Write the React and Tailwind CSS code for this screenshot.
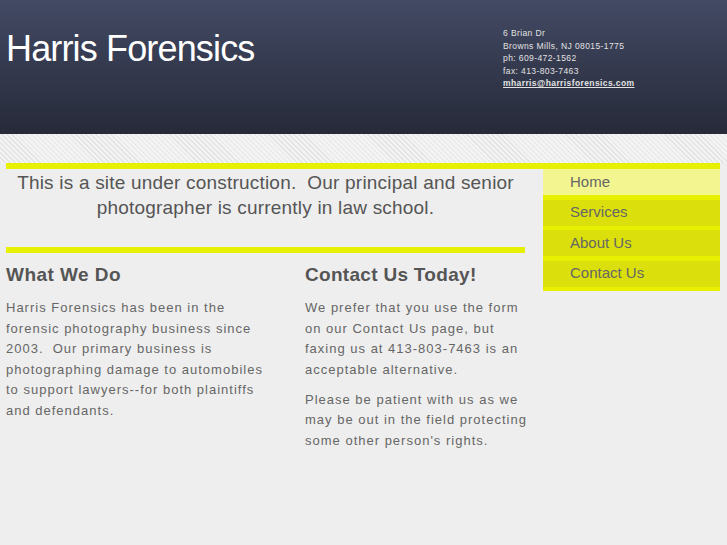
import React from "react";

const navItems = ["Home", "Services", "About Us", "Contact Us"];

export default function App() {
  return (
    <div className="min-h-[545px] bg-[#eeeeee] font-['Liberation_Sans',Arial,sans-serif]">
      <header className="h-[134px] flex justify-between bg-gradient-to-b from-[#434a64] to-[#262a39]">
        <h1 className="pl-[6px] pt-[31px] text-[36px] leading-none font-normal text-white tracking-[-0.85px]">
          Harris Forensics
        </h1>
        <div className="w-[224px] pt-[27px] text-[8.5px] leading-[12.5px] tracking-[0.4px] text-[#e2e2e2]">
          <div>6 Brian Dr</div>
          <div>Browns Mills, NJ 08015-1775</div>
          <div>ph: 609-472-1562</div>
          <div>fax: 413-803-7463</div>
          <div className="font-bold underline">mharris@harrisforensics.com</div>
        </div>
      </header>
      <div className="h-[29px] bg-[repeating-linear-gradient(45deg,#e3e3e3_0px,#e3e3e3_1px,#f3f3f3_1px,#f3f3f3_3.5px)]" />
      <div className="ml-[6px] w-[714px]">
        <div className="h-[6px] bg-[#e6f000]" />
        <div className="flex">
          <div className="w-[519px] shrink-0">
            <p className="pt-[1px] text-center text-[19px] leading-[25px] tracking-[0.2px] text-[#555555]">
              {"This is a site under construction.\u00a0 Our principal and senior photographer is currently in law school."}
            </p>
            <div className="mt-[27px] h-[6px] bg-[#e6f000]" />
            <div className="flex mt-[10px]">
              <div className="w-[265px] shrink-0">
                <h2 className="text-[19px] leading-[24px] font-bold tracking-[0.45px] text-[#555555]">What We Do</h2>
                <p className="mt-[11px] text-[13px] leading-[20.6px] tracking-[1px] text-[#666666]">
                  {"Harris Forensics has been in the forensic photography business since 2003.\u00a0 Our primary business is photographing damage to automobiles to support lawyers--for both plaintiffs and defendants."}
                </p>
              </div>
              <div className="ml-[34px] w-[224px] shrink-0">
                <h2 className="text-[19px] leading-[24px] font-bold tracking-[0.3px] text-[#555555]">Contact Us Today!</h2>
                <p className="mt-[11px] text-[13px] leading-[20.6px] tracking-[1px] text-[#666666]">
                  We prefer that you use the form on our Contact Us page, but faxing us at 413-803-7463 is an acceptable alternative.
                </p>
                <p className="mt-[9.5px] text-[13px] leading-[20.6px] tracking-[1px] text-[#666666]">
                  Please be patient with us as we may be out in the field protecting some other person's rights.
                </p>
              </div>
            </div>
          </div>
          <nav className="ml-[18px] w-[177px] shrink-0 self-start bg-[#e6f000] pb-[4.5px] flex flex-col gap-[4.5px]">
            {navItems.map((item, i) => (
              <div
                key={item}
                className={
                  i === 0
                    ? "h-[26px] flex items-center pl-[27px] text-[15px] text-[#666666] bg-[#f3f690]"
                    : "h-[26px] flex items-center pl-[27px] text-[15px] text-[#666666] bg-[#dbe00c]"
                }
              >
                {item}
              </div>
            ))}
          </nav>
        </div>
      </div>
    </div>
  );
}
